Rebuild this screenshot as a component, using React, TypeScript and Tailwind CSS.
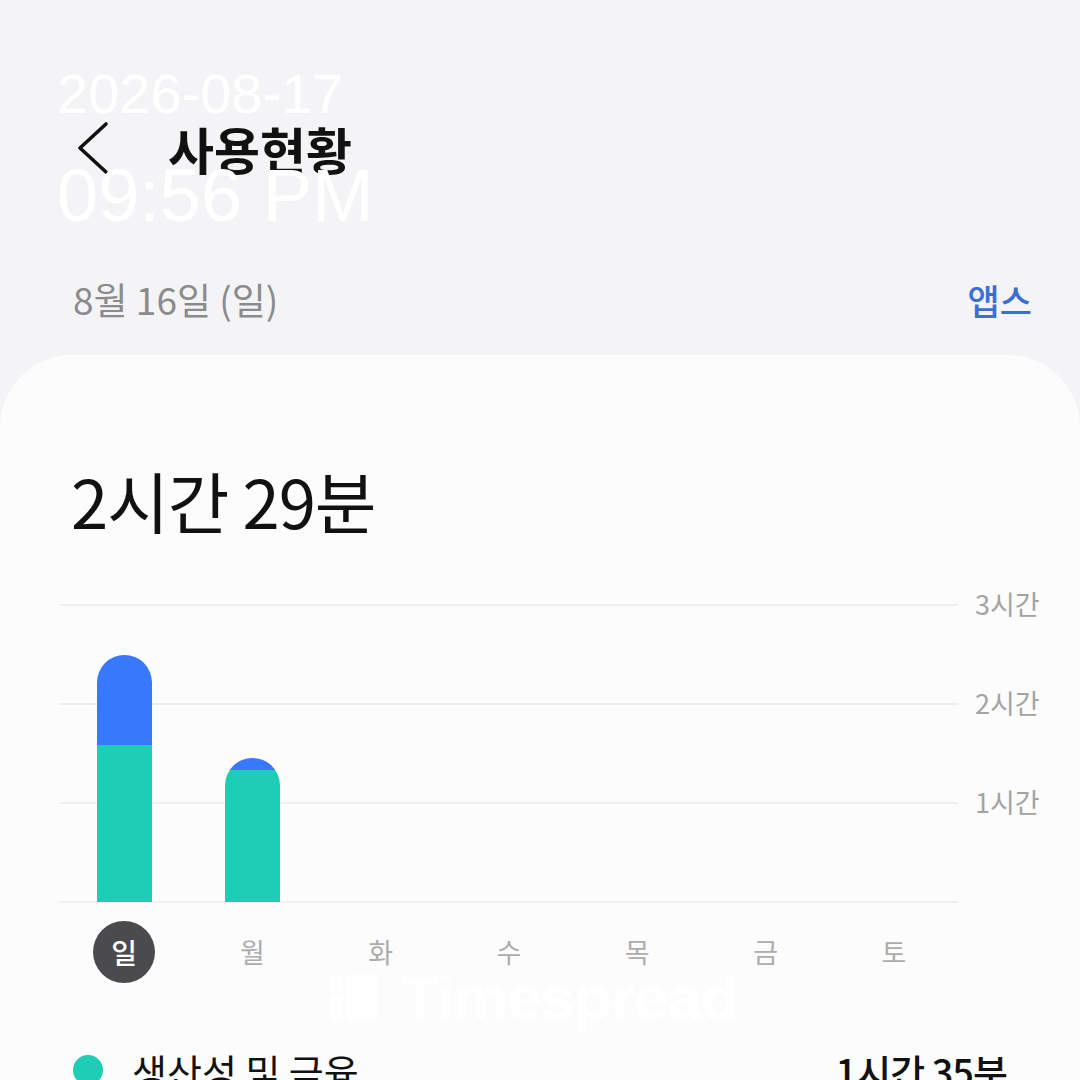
const kr = { fontFamily: '"Noto Sans CJK KR", "Noto Sans", sans-serif' };

type DayBar = { day: string; total: number; blue: number };

const HOUR = 99.3;

const days: DayBar[] = [
  { day: "일", total: 2.483, blue: 0.9 },
  { day: "월", total: 1.45, blue: 0.12 },
  { day: "화", total: 0, blue: 0 },
  { day: "수", total: 0, blue: 0 },
  { day: "목", total: 0, blue: 0 },
  { day: "금", total: 0, blue: 0 },
  { day: "토", total: 0, blue: 0 },
];

function Chart() {
  return (
    <div className="flex pl-[60px]">
      <div className="relative h-[298px] w-[898px]">
        {[0, 99, 198, 297].map((top) => (
          <div
            key={top}
            className="absolute left-0 right-0 h-[2px] bg-[#efeff1]"
            style={{ top }}
          />
        ))}
        <div className="relative grid h-full grid-cols-7 items-end">
          {days.map((d) => (
            <div key={d.day} className="flex justify-center">
              {d.total > 0 && (
                <div
                  className="flex w-[55px] flex-col overflow-hidden rounded-t-full"
                  style={{ height: d.total * HOUR }}
                >
                  <div className="bg-[#3878fd]" style={{ height: d.blue * HOUR }} />
                  <div className="flex-1 bg-[#1ecdb5]" />
                </div>
              )}
            </div>
          ))}
        </div>
      </div>
      <div
        className="relative ml-[17px] h-[298px] text-[27px] leading-none text-[#a3a3a3]"
        style={kr}
      >
        <div className="absolute top-[-14px] whitespace-nowrap">3시간</div>
        <div className="absolute top-[85px] whitespace-nowrap">2시간</div>
        <div className="absolute top-[184px] whitespace-nowrap">1시간</div>
      </div>
    </div>
  );
}

function Watermark() {
  return (
    <div className="pointer-events-none absolute left-[330px] top-[620px] flex items-end gap-[24px] text-white">
      <svg width="47" height="46" viewBox="0 0 47 46" fill="#ffffff">
        <rect x="0" y="1" width="13" height="15" />
        <rect x="0" y="19" width="13" height="27" />
        <rect x="16" y="0" width="31" height="46" />
      </svg>
      <span
        className="text-[62px] font-bold leading-[46px] tracking-[-1px]"
        style={{ fontFamily: '"Liberation Sans", Arial, sans-serif' }}
      >
        Timespread
      </span>
    </div>
  );
}

export default function App() {
  return (
    <div className="relative h-[1080px] w-[1080px] overflow-hidden bg-[#f4f4f6]" style={kr}>
      <div className="flex h-[80px] mt-[108px] items-center pl-[75px]">
        <svg width="36" height="56" viewBox="0 0 36 56" fill="none">
          <path d="M31 4 L5 28 L31 52" stroke="#111" strokeWidth="3.6" strokeLinecap="round" strokeLinejoin="round" />
        </svg>
        <h1 className="ml-[57px] text-[50px] font-semibold text-[#111]">사용현황</h1>
      </div>

      <div className="mt-[84px] flex h-[56px] items-center justify-between pl-[73px] pr-[48px]">
        <span className="text-[37px] text-[#8b8b8d]">8월 16일 (일)</span>
        <span className="text-[35px] font-medium text-[#3b6fd6]">앱스</span>
      </div>

      <div className="relative mt-[27px] rounded-t-[72px] bg-[#fcfcfc] pb-[40px] pt-[105px]">
        <div className="flex h-[80px] items-center pl-[71px] text-[67px] tracking-[-1px] text-[#111]">
          2시간 29분
        </div>

        <div className="mt-[64px]">
          <Chart />
        </div>

        <div className="mt-[19px] grid w-[898px] ml-[60px] grid-cols-7">
          {days.map((d, i) => (
            <div key={d.day} className="flex justify-center">
              {i === 0 ? (
                <div className="flex h-[62px] w-[62px] items-center justify-center rounded-full bg-[#4b4b4d] text-[28px] font-medium text-white">
                  {d.day}
                </div>
              ) : (
                <div className="flex h-[62px] items-center text-[27px] text-[#acacac]">{d.day}</div>
              )}
            </div>
          ))}
        </div>

        <div className="mt-[57px] flex h-[60px] items-center pl-[73px] pr-[73px]">
          <div className="h-[30px] w-[30px] rounded-full bg-[#1ecdb5]" />
          <span className="ml-[29px] flex-1 text-[38px] text-[#111]">생산성 및 금융</span>
          <span className="text-[38px] font-medium tracking-[-1px] text-[#111]">1시간 35분</span>
        </div>

        <Watermark />
      </div>

      <div
        className="pointer-events-none absolute left-[57px] top-[62px] text-white"
        style={{ fontFamily: '"Liberation Sans", Arial, sans-serif' }}
      >
        <div className="text-[56px] leading-[64px]">2026-08-17</div>
        <div className="mt-[30px] text-[74px] leading-[80px]">09:56 PM</div>
      </div>
    </div>
  );
}
